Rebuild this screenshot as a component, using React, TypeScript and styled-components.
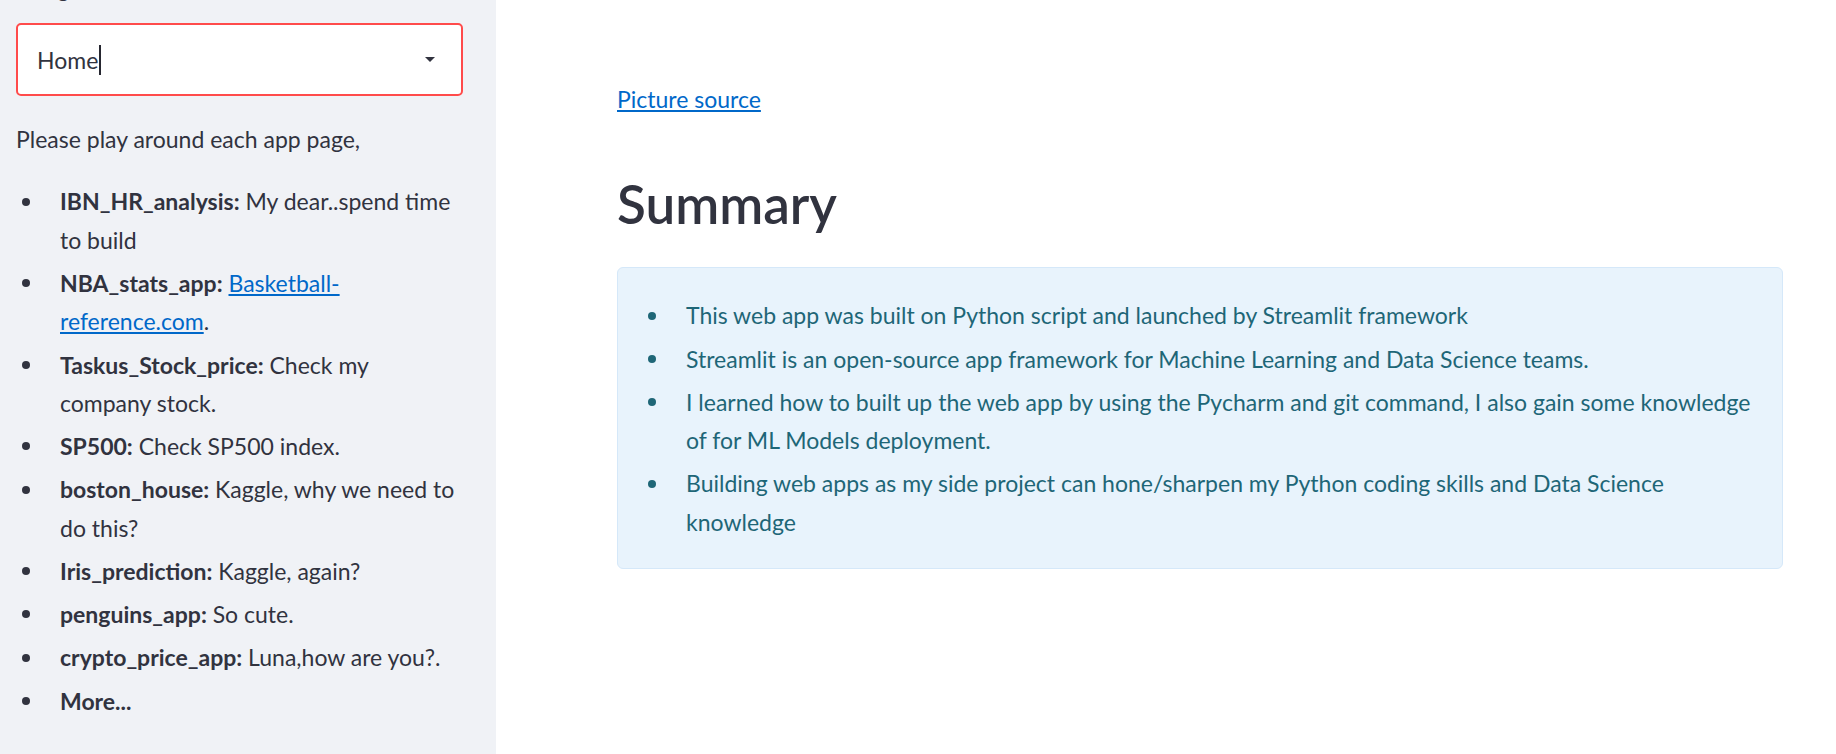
import React from 'react';
import styled, { createGlobalStyle } from 'styled-components';

const Global = createGlobalStyle`
  html, body { margin: 0; padding: 0; background: #ffffff; }
  body {
    font-family: Lato, "Noto Sans", "Liberation Sans", sans-serif;
    color: #31333f;
    -webkit-font-smoothing: antialiased;
  }
  * { box-sizing: border-box; }
`;

const Page = styled.div`
  display: grid;
  grid-template-columns: 496px 1fr;
  height: 754px;
  overflow: hidden;
`;

const Sidebar = styled.aside`
  background: #f0f2f6;
  padding: 0 33px 0 16px;
  display: flex;
  flex-direction: column;
  overflow: hidden;
`;

const FieldLabel = styled.label`
  display: block;
  font-size: 21px;
  line-height: 24px;
  margin: -23px 0 22px 0;
`;

const SelectBox = styled.div`
  height: 73px;
  border: 2px solid #ff4b4b;
  border-radius: 5px;
  background: #ffffff;
  display: flex;
  align-items: center;
  padding: 0 26px 0 19px;
`;

const SelectValue = styled.span`
  font-size: 23px;
  line-height: 30px;
`;

const Cursor = styled.span`
  width: 2px;
  height: 30px;
  background: #262730;
  margin-left: 1px;
`;

const Spacer = styled.span`
  flex: 1;
`;

const Caret = () => (
  <svg width="10" height="5" viewBox="0 0 10 5">
    <path d="M0 0 L10 0 L5 5 Z" fill="#31333f" />
  </svg>
);

const Paragraph = styled.p`
  margin: 24px 0 0 0;
  font-size: 23px;
  line-height: 38.4px;
`;

const List = styled.ul<{ $tone?: string }>`
  list-style: none;
  margin: ${(p) => (p.$tone ? '0' : '24px 0 0 0')};
  padding: 0;
  color: ${(p) => p.$tone ?? 'inherit'};
`;

const Item = styled.li`
  display: grid;
  grid-template-columns: 44px 1fr;
  margin-top: 4.8px;
  font-size: 23px;
  line-height: 38.4px;
  &:first-child { margin-top: 0; }
`;

const BulletCell = styled.span`
  height: 38.4px;
  display: flex;
  align-items: center;
  padding-left: 6px;
`;

const Dot = styled.span`
  width: 8px;
  height: 8px;
  border-radius: 50%;
  background: currentColor;
`;

const Strong = styled.strong`
  font-weight: 700;
`;

const Link = styled.a`
  color: #0068c9;
  text-decoration: underline;
  text-underline-offset: 2px;
`;

const Main = styled.main`
  padding: 80px 53px 0 121px;
  display: flex;
  flex-direction: column;
  align-items: stretch;
`;

const SourceLink = styled(Link)`
  align-self: flex-start;
  font-size: 23px;
  line-height: 38.4px;
`;

const Heading = styled.h2`
  margin: 54px 0 0 0;
  font-size: 53px;
  line-height: 64px;
  font-weight: 600;
  color: #31333f;
  letter-spacing: 0;
`;

const InfoBox = styled.div`
  margin-top: 31px;
  background: #e8f3fc;
  border: 1px solid #d5e8f9;
  border-radius: 6px;
  padding: 28px 24px 27px 24px;
`;

const Bullet: React.FC<{ children: React.ReactNode }> = ({ children }) => (
  <Item>
    <BulletCell>
      <Dot />
    </BulletCell>
    <span>{children}</span>
  </Item>
);

export default function App() {
  return (
    <>
      <Global />
      <Page>
        <Sidebar>
          <FieldLabel>Navigation</FieldLabel>
          <SelectBox>
            <SelectValue>Home</SelectValue>
            <Cursor />
            <Spacer />
            <Caret />
          </SelectBox>
          <Paragraph>Please play around each app page,</Paragraph>
          <List>
            <Bullet>
              <Strong>IBN_HR_analysis:</Strong> My dear..spend time to build
            </Bullet>
            <Bullet>
              <Strong>NBA_stats_app:</Strong> <Link href="#">Basketball-reference.com</Link>.
            </Bullet>
            <Bullet>
              <Strong>Taskus_Stock_price:</Strong> Check my company stock.
            </Bullet>
            <Bullet>
              <Strong>SP500:</Strong> Check SP500 index.
            </Bullet>
            <Bullet>
              <Strong>boston_house:</Strong> Kaggle, why we need to do this?
            </Bullet>
            <Bullet>
              <Strong>Iris_prediction:</Strong> Kaggle, again?
            </Bullet>
            <Bullet>
              <Strong>penguins_app:</Strong> So cute.
            </Bullet>
            <Bullet>
              <Strong>crypto_price_app:</Strong> Luna,how are you?.
            </Bullet>
            <Bullet>
              <Strong>More...</Strong>
            </Bullet>
          </List>
        </Sidebar>
        <Main>
          <SourceLink href="#">Picture source</SourceLink>
          <Heading>Summary</Heading>
          <InfoBox>
            <List $tone="#1e6677">
              <Bullet>This web app was built on Python script and launched by Streamlit framework</Bullet>
              <Bullet>Streamlit is an open-source app framework for Machine Learning and Data Science teams.</Bullet>
              <Bullet>
                I learned how to built up the web app by using the Pycharm and git command, I also gain some knowledge of for ML Models deployment.
              </Bullet>
              <Bullet>
                Building web apps as my side project can hone/sharpen my Python coding skills and Data Science knowledge
              </Bullet>
            </List>
          </InfoBox>
        </Main>
      </Page>
    </>
  );
}
